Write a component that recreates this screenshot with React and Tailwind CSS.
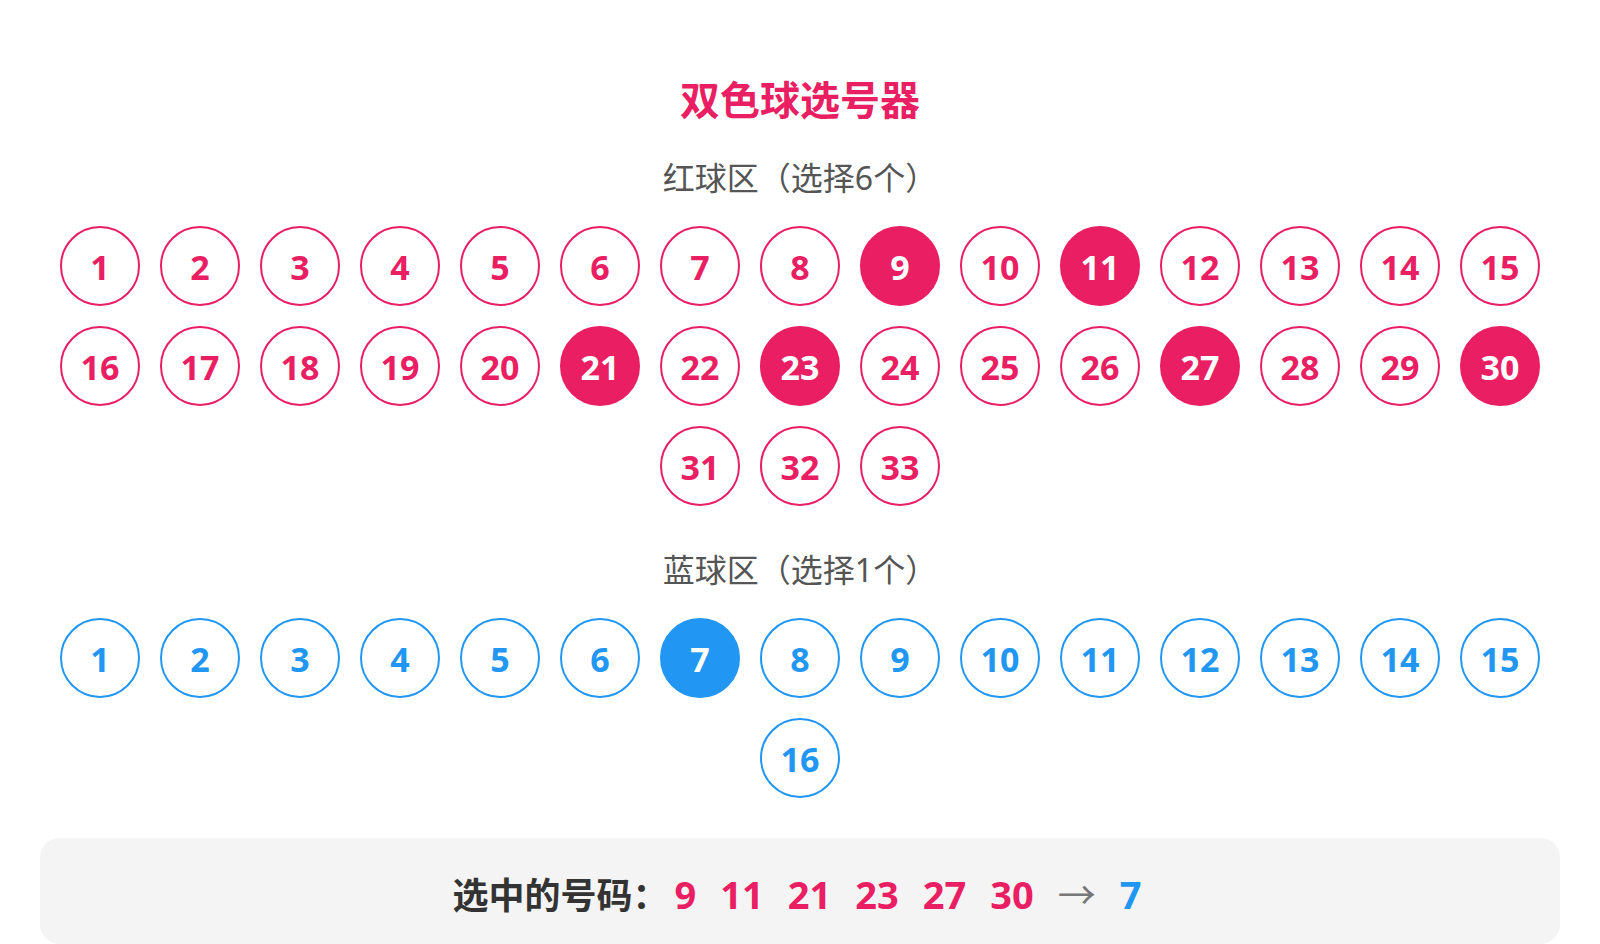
import { useState } from "react";

const RED = Array.from({ length: 33 }, (_, i) => i + 1);
const BLUE = Array.from({ length: 16 }, (_, i) => i + 1);

const TONES = {
  red: { on: "border-[#e91e63] bg-[#e91e63] text-white", off: "border-[#e91e63] text-[#e91e63]" },
  blue: { on: "border-[#2196f3] bg-[#2196f3] text-white", off: "border-[#2196f3] text-[#2196f3]" },
};

function Ball({ number, tone, selected, onClick }) {
  return (
    <button
      type="button"
      aria-pressed={selected}
      onClick={onClick}
      className={`flex size-20 items-center justify-center rounded-full border-2 pt-0.5 text-[34px] leading-10 font-bold ${
        selected ? TONES[tone].on : TONES[tone].off
      }`}
    >
      {number}
    </button>
  );
}

function Zone({ title, numbers, tone, selected, onPick }) {
  return (
    <section>
      <h2 className="text-center text-[32px] leading-12 text-[#555]">{title}</h2>
      <div className="mt-6 flex flex-wrap justify-center gap-5 px-5">
        {numbers.map((n) => (
          <Ball key={n} number={n} tone={tone} selected={selected.includes(n)} onClick={() => onPick(n)} />
        ))}
      </div>
    </section>
  );
}

export default function App() {
  const [red, setRed] = useState([9, 11, 21, 23, 27, 30]);
  const [blue, setBlue] = useState([7]);

  const pickRed = (n) =>
    setRed((cur) =>
      cur.includes(n) ? cur.filter((x) => x !== n) : cur.length < 6 ? [...cur, n].sort((a, b) => a - b) : cur
    );
  const pickBlue = (n) => setBlue((cur) => (cur.includes(n) ? [] : [n]));

  return (
    <main className="bg-white px-10 pt-[70px] font-['Noto_Sans','Noto_Sans_CJK_SC',sans-serif]">
      <h1 className="text-center text-[40px] leading-[60px] font-bold text-[#e91e63]">双色球选号器</h1>
      <div className="mt-6 flex flex-col gap-10">
        <Zone title="红球区（选择6个）" numbers={RED} tone="red" selected={red} onPick={pickRed} />
        <Zone title="蓝球区（选择1个）" numbers={BLUE} tone="blue" selected={blue} onPick={pickBlue} />
      </div>
      <div className="mt-10 flex items-baseline justify-center rounded-[20px] bg-[#f4f4f4] pt-[25px] pb-[18px] text-[38px] leading-[60px] font-bold">
        <span className="text-[36px] text-[#333]">选中的号码：</span>
        <div className="flex items-baseline gap-6 px-1.5">
          {red.map((n) => (
            <span key={n} className="text-[#e91e63]">{n}</span>
          ))}
          <span className="font-['Noto_Sans_CJK_SC',sans-serif] text-[38px] font-normal text-[#777]">→</span>
          {blue.map((n) => (
            <span key={n} className="text-[#2196f3]">{n}</span>
          ))}
        </div>
      </div>
    </main>
  );
}
